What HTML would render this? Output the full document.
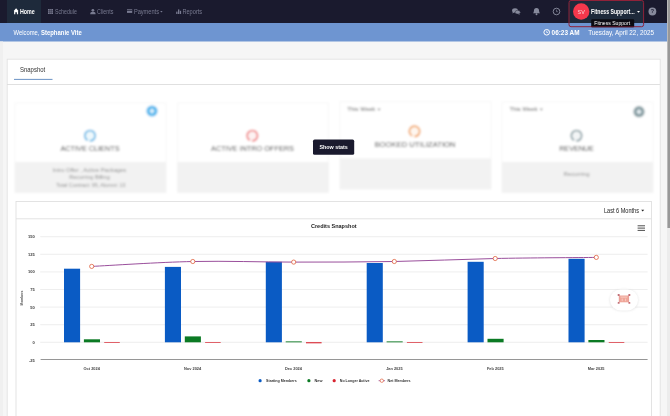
<!DOCTYPE html>
<html><head><meta charset="utf-8"><title>Home</title>
<style>
*{margin:0;padding:0}
html,body{width:670px;height:416px;overflow:hidden;background:#f6f6f6}
svg{display:block;font-family:"Liberation Sans",sans-serif;will-change:transform}
text{font-family:"Liberation Sans",sans-serif}
</style></head><body>
<svg width="670" height="416" viewBox="0 0 670 416">
<defs>
<filter id="b" x="-5%" y="-5%" width="110%" height="110%"><feGaussianBlur stdDeviation="1.05"/></filter>
<filter id="sh" x="-30%" y="-30%" width="160%" height="160%"><feGaussianBlur stdDeviation="1.2"/></filter>
</defs>
<rect width="670" height="416" fill="#f6f6f6"/>
<rect x="0" y="0" width="667" height="23" fill="#1a1a2e"/>
<rect x="0" y="23" width="667" height="18.5" fill="#6e95d1"/>
<rect x="7" y="0" width="34" height="23" fill="#1e2a3b"/>
<path d="M13.7 11.1 L16.1 8.2 L18.5 11.1 L18.1 11.1 L18.1 14.3 L16.9 14.3 L16.9 12.2 L15.3 12.2 L15.3 14.3 L14.1 14.3 L14.1 11.1 Z" fill="#fff"/>
<text x="20" y="14" font-size="6.7" fill="#fff" font-weight="bold" textLength="14.8" lengthAdjust="spacingAndGlyphs" >Home</text>
<rect x="48" y="9" width="5" height="5" fill="#797b91"/><path d="M48 10.7h5M48 12.3h5M49.7 9v5M51.3 9v5" stroke="#1a1a2e" stroke-width="0.4"/>
<text x="55" y="13.9" font-size="6.6" fill="#797b91" textLength="21.8" lengthAdjust="spacingAndGlyphs" >Schedule</text>
<circle cx="92.9" cy="10.3" r="1.4" fill="#797b91"/><path d="M90.2 14.2 q0 -2.4 2.7 -2.4 q2.7 0 2.7 2.4 z" fill="#797b91"/>
<text x="97.1" y="13.9" font-size="6.6" fill="#797b91" textLength="16.3" lengthAdjust="spacingAndGlyphs" >Clients</text>
<rect x="127" y="9.3" width="5.2" height="3.6" fill="#797b91"/><rect x="127" y="10.2" width="5.2" height="0.7" fill="#1a1a2e"/>
<text x="133.9" y="13.9" font-size="6.6" fill="#797b91" textLength="25.1" lengthAdjust="spacingAndGlyphs" >Payments</text>
<path d="M160.2 11 l2.4 0 l-1.2 1.4 z" fill="#797b91"/>
<rect x="176.2" y="11.6" width="1.3" height="2.4" fill="#797b91"/><rect x="178" y="9.4" width="1.3" height="4.6" fill="#797b91"/><rect x="179.8" y="10.8" width="1.3" height="3.2" fill="#797b91"/>
<text x="182.4" y="13.9" font-size="6.6" fill="#797b91" textLength="19.8" lengthAdjust="spacingAndGlyphs" >Reports</text>
<ellipse cx="515" cy="10.4" rx="2.9" ry="2.2" fill="#878a9c"/><path d="M513 11.6 l-0.7 1.9 l2.2 -1.2 z" fill="#878a9c"/><ellipse cx="517.7" cy="12.2" rx="2.6" ry="1.9" fill="#878a9c" stroke="#1a1a2e" stroke-width="0.4"/><path d="M519 13.4 l1 1.4 l-2.2 -0.8 z" fill="#878a9c"/>
<path d="M536.5 8 q2.6 0 2.6 3 q0 1.6 0.9 2.3 h-7 q0.9 -0.7 0.9 -2.3 q0 -3 2.6 -3 z" fill="#878a9c"/><circle cx="536.5" cy="14.2" r="0.95" fill="#878a9c"/>
<circle cx="556.5" cy="11.5" r="3.3" fill="none" stroke="#878a9c" stroke-width="0.95"/><path d="M556.5 9.7 v2 h1.4" stroke="#878a9c" stroke-width="0.65" fill="none"/>
<rect x="569" y="0.5" width="74.6" height="22.5" fill="#1e2a3b"/><rect x="569" y="0.5" width="74.6" height="26.2" rx="2" fill="none" stroke="#8f2239" stroke-width="1"/>
<circle cx="581.2" cy="11.5" r="8.2" fill="#f5384c"/>
<text x="581.2" y="13.6" font-size="5.8" fill="#fbd5d9" text-anchor="middle" textLength="7.2" lengthAdjust="spacingAndGlyphs" >SV</text>
<text x="591" y="13.9" font-size="6.5" fill="#fff" font-weight="bold" textLength="43.6" lengthAdjust="spacingAndGlyphs" >Fitness Support...</text>
<path d="M637 10.9 l3 0 l-1.5 1.8 z" fill="#fff"/>
<circle cx="652.4" cy="11.5" r="3.9" fill="#878a9c"/>
<text x="652.4" y="13.4" font-size="5.4" fill="#1a1a2e" font-weight="bold" text-anchor="middle" >?</text>
<text x="13.5" y="34.6" font-size="6.4" fill="#fff" textLength="25.9" lengthAdjust="spacingAndGlyphs" >Welcome,</text>
<text x="41" y="34.6" font-size="6.4" fill="#fff" font-weight="bold" textLength="40.8" lengthAdjust="spacingAndGlyphs" >Stephanie Vite</text>
<circle cx="546.7" cy="32.3" r="2.8" fill="none" stroke="#fff" stroke-width="1"/><path d="M546.7 30.7 v1.8 h1.3" stroke="#fff" stroke-width="0.7" fill="none"/>
<text x="551.6" y="34.6" font-size="6.4" fill="#fff" font-weight="bold" textLength="27.9" lengthAdjust="spacingAndGlyphs" >06:23 AM</text>
<text x="588.2" y="34.8" font-size="6.8" fill="#fff" textLength="65.8" lengthAdjust="spacingAndGlyphs" >Tuesday, April 22, 2025</text>
<rect x="591.2" y="19.2" width="43" height="8" rx="1" fill="#0b0b12"/>
<path d="M591.2 26.7 h43" stroke="#8a1d33" stroke-width="0.7" opacity="0.85"/>
<text x="612.2" y="25.1" font-size="5.7" fill="#fff" text-anchor="middle" textLength="35.8" lengthAdjust="spacingAndGlyphs" >Fitness Support</text>
<rect x="667" y="0" width="3" height="416" fill="#ececec"/>
<rect x="667.4" y="0" width="2.6" height="228" fill="#989898"/>
<rect x="0" y="41.5" width="3" height="375" fill="#f0f0f0"/>
<rect x="7.2" y="59.2" width="653" height="360" fill="#fff" stroke="#e2e2e2" stroke-width="0.9"/>
<path d="M7 84.5 H660" stroke="#dcdcdc" stroke-width="0.9"/>
<path d="M14 79.4 H52.5" stroke="#5a86bd" stroke-width="0.9"/>
<text x="20" y="72" font-size="6.9" fill="#333" textLength="25.2" lengthAdjust="spacingAndGlyphs" >Snapshot</text>
<g filter="url(#b)">
<rect x="15" y="103" width="151" height="89.5" fill="#fff" stroke="#f7f7f7" stroke-width="1"/>
<rect x="15" y="162" width="151" height="30.5" fill="#f2f2f2"/>
<rect x="177.5" y="103" width="151" height="89.5" fill="#fff" stroke="#f7f7f7" stroke-width="1"/>
<rect x="177.5" y="162" width="151" height="30.5" fill="#f2f2f2"/>
<rect x="340" y="101.5" width="151" height="87.5" fill="#fff" stroke="#f7f7f7" stroke-width="1"/>
<rect x="340" y="158.5" width="151" height="30.5" fill="#f2f2f2"/>
<rect x="502" y="102" width="151" height="90.5" fill="#fff" stroke="#f7f7f7" stroke-width="1"/>
<rect x="502" y="162" width="151" height="30.5" fill="#f2f2f2"/>
<circle cx="90" cy="135.7" r="5.2" fill="#5db6e6" fill-opacity="0.1" stroke="#5db6e6" stroke-width="1.7" stroke-dasharray="29.5 3.2" transform="rotate(118 90 135.7)"/>
<circle cx="252.3" cy="135.7" r="5.2" fill="#f07f80" fill-opacity="0.1" stroke="#f07f80" stroke-width="1.7" stroke-dasharray="29.5 3.2" transform="rotate(118 252.3 135.7)"/>
<circle cx="414.5" cy="131.3" r="5.2" fill="#f2a766" fill-opacity="0.1" stroke="#f2a766" stroke-width="1.7" stroke-dasharray="29.5 3.2" transform="rotate(118 414.5 131.3)"/>
<circle cx="576.5" cy="135.7" r="5.2" fill="#8ba0a6" fill-opacity="0.1" stroke="#8ba0a6" stroke-width="1.7" stroke-dasharray="29.5 3.2" transform="rotate(118 576.5 135.7)"/>
<circle cx="152" cy="111" r="5.6" fill="#5cbaee"/><path d="M149.6 111h4.8M152 108.6v4.8" stroke="#f2f9fd" stroke-width="1.6"/>
<circle cx="639" cy="111.7" r="5.6" fill="#8ba0a6"/><path d="M636.6 111.7h4.8M639 109.3v4.8" stroke="#f2f9fd" stroke-width="1.6"/>
<text x="90" y="151.4" font-size="7.6" fill="#4c4c4c" text-anchor="middle" textLength="59" lengthAdjust="spacingAndGlyphs" >ACTIVE CLIENTS</text>
<text x="252.5" y="151.4" font-size="7.6" fill="#4c4c4c" text-anchor="middle" textLength="83" lengthAdjust="spacingAndGlyphs" >ACTIVE INTRO OFFERS</text>
<text x="415" y="146.9" font-size="7.6" fill="#4c4c4c" text-anchor="middle" textLength="81" lengthAdjust="spacingAndGlyphs" >BOOKED UTILIZATION</text>
<text x="576.5" y="151.4" font-size="7.6" fill="#4c4c4c" text-anchor="middle" textLength="34.6" lengthAdjust="spacingAndGlyphs" >REVENUE</text>
<text x="89.5" y="171.6" font-size="5.6" fill="#929292" text-anchor="middle" textLength="73.5" lengthAdjust="spacingAndGlyphs" >Intro Offer , Active Packages</text>
<text x="89.5" y="179.4" font-size="5.6" fill="#929292" text-anchor="middle" textLength="40.5" lengthAdjust="spacingAndGlyphs" >Recurring Billing</text>
<text x="90.8" y="187.2" font-size="5.6" fill="#929292" text-anchor="middle" textLength="69.3" lengthAdjust="spacingAndGlyphs" >Total Contract: 95, Alumni: 13</text>
<text x="576.5" y="175.6" font-size="5.6" fill="#929292" text-anchor="middle" textLength="26" lengthAdjust="spacingAndGlyphs" >Recurring</text>
<text x="347.3" y="111.4" font-size="5.9" fill="#666" textLength="28" lengthAdjust="spacingAndGlyphs" >This Week</text>
<path d="M377.5 108.8 l3 0 l-1.5 1.7 z" fill="#666"/>
<text x="509.6" y="111.4" font-size="5.9" fill="#666" textLength="28" lengthAdjust="spacingAndGlyphs" >This Week</text>
<path d="M539.8 108.8 l3 0 l-1.5 1.7 z" fill="#666"/>
</g>
<rect x="313" y="139.6" width="41.2" height="15.2" rx="1.6" fill="#1a1a2e"/>
<text x="333.6" y="149.4" font-size="6" fill="#fff" font-weight="bold" text-anchor="middle" textLength="28.4" lengthAdjust="spacingAndGlyphs" >Show stats</text>
<rect x="16" y="201.5" width="635.5" height="220" fill="#fff" stroke="#e0e0e0" stroke-width="0.9"/>
<path d="M16 218.8 H651.5" stroke="#e0e0e0" stroke-width="0.9"/>
<text x="604" y="212.8" font-size="6.8" fill="#222" textLength="35" lengthAdjust="spacingAndGlyphs" >Last 6 Months</text>
<path d="M641.2 209.7 l3 0 l-1.5 1.8 z" fill="#222"/>
<text x="333.8" y="227.8" font-size="5.6" fill="#222" font-weight="bold" text-anchor="middle" textLength="45.7" lengthAdjust="spacingAndGlyphs" >Credits Snapshot</text>
<path d="M637.6 225.8 h7.4 M637.6 228.1 h7.4 M637.6 230.4 h7.4" stroke="#444" stroke-width="0.95"/>
<path d="M40.2 236.7 H647.6" stroke="#e7e7e7" stroke-width="0.7"/>
<text x="34.8" y="238.2" font-size="4" fill="#383838" font-weight="bold" text-anchor="end" >150</text>
<path d="M40.2 254.3 H647.6" stroke="#e7e7e7" stroke-width="0.7"/>
<text x="34.8" y="255.8" font-size="4" fill="#383838" font-weight="bold" text-anchor="end" >125</text>
<path d="M40.2 271.9 H647.6" stroke="#e7e7e7" stroke-width="0.7"/>
<text x="34.8" y="273.4" font-size="4" fill="#383838" font-weight="bold" text-anchor="end" >100</text>
<path d="M40.2 289.5 H647.6" stroke="#e7e7e7" stroke-width="0.7"/>
<text x="34.8" y="291.0" font-size="4" fill="#383838" font-weight="bold" text-anchor="end" >75</text>
<path d="M40.2 307.1 H647.6" stroke="#e7e7e7" stroke-width="0.7"/>
<text x="34.8" y="308.6" font-size="4" fill="#383838" font-weight="bold" text-anchor="end" >50</text>
<path d="M40.2 324.7 H647.6" stroke="#e7e7e7" stroke-width="0.7"/>
<text x="34.8" y="326.2" font-size="4" fill="#383838" font-weight="bold" text-anchor="end" >25</text>
<path d="M40.2 342.3 H647.6" stroke="#e7e7e7" stroke-width="0.7"/>
<text x="34.8" y="343.8" font-size="4" fill="#383838" font-weight="bold" text-anchor="end" >0</text>
<path d="M40.6 359.5 H647.6" stroke="#8a8a8a" stroke-width="0.9"/>
<text x="34.8" y="361.7" font-size="4" fill="#383838" font-weight="bold" text-anchor="end" >-25</text>
<text transform="translate(23.2 298) rotate(-90)" font-size="3.4" fill="#555" font-weight="bold" text-anchor="middle">Members</text>
<rect x="64.0" y="268.7" width="16.1" height="73.6" fill="#0a5bc4"/>
<rect x="83.9" y="339.3" width="16.1" height="3.0" fill="#0b7a24"/>
<rect x="104.2" y="342.2" width="15.6" height="0.7" fill="#d8232f"/>
<text x="91.7" y="369.8" font-size="3.9" fill="#444" font-weight="bold" text-anchor="middle" >Oct 2024</text>
<rect x="164.9" y="266.9" width="16.1" height="75.4" fill="#0a5bc4"/>
<rect x="184.8" y="336.4" width="16.1" height="5.9" fill="#0b7a24"/>
<rect x="205.1" y="342.2" width="15.6" height="0.7" fill="#d8232f"/>
<text x="192.6" y="369.8" font-size="3.9" fill="#444" font-weight="bold" text-anchor="middle" >Nov 2024</text>
<rect x="265.8" y="261.8" width="16.1" height="80.5" fill="#0a5bc4"/>
<rect x="285.7" y="341.4" width="16.1" height="0.9" fill="#0b7a24"/>
<rect x="306.0" y="342.2" width="15.6" height="1.1" fill="#d8232f"/>
<text x="293.5" y="369.8" font-size="3.9" fill="#444" font-weight="bold" text-anchor="middle" >Dec 2024</text>
<rect x="366.7" y="263" width="16.1" height="79.3" fill="#0a5bc4"/>
<rect x="386.6" y="341.4" width="16.1" height="0.9" fill="#0b7a24"/>
<rect x="406.9" y="342.2" width="15.6" height="0.7" fill="#d8232f"/>
<text x="394.4" y="369.8" font-size="3.9" fill="#444" font-weight="bold" text-anchor="middle" >Jan 2025</text>
<rect x="467.6" y="261.8" width="16.1" height="80.5" fill="#0a5bc4"/>
<rect x="487.5" y="338.8" width="16.1" height="3.5" fill="#0b7a24"/>
<text x="495.3" y="369.8" font-size="3.9" fill="#444" font-weight="bold" text-anchor="middle" >Feb 2025</text>
<rect x="568.5" y="258.8" width="16.1" height="83.5" fill="#0a5bc4"/>
<rect x="588.4" y="340" width="16.1" height="2.3" fill="#0b7a24"/>
<rect x="608.7" y="342.2" width="15.6" height="0.7" fill="#d8232f"/>
<text x="596.2" y="369.8" font-size="3.9" fill="#444" font-weight="bold" text-anchor="middle" >Mar 2025</text>
<path d="M91.7 266.4 C108.6 265.6 159.1 262.2 192.8 261.5 C226.5 260.8 260.1 262.1 293.7 262.1 C327.3 262.1 360.7 262.1 394.3 261.5 C427.9 260.9 461.5 259.2 495.2 258.5 C528.9 257.8 579.4 257.6 596.3 257.4" fill="none" stroke="#9a4f9c" stroke-width="1"/>
<circle cx="91.7" cy="266.4" r="2.1" fill="#fff" stroke="#e0603c" stroke-width="0.8"/>
<circle cx="192.8" cy="261.5" r="2.1" fill="#fff" stroke="#e0603c" stroke-width="0.8"/>
<circle cx="293.7" cy="262.1" r="2.1" fill="#fff" stroke="#e0603c" stroke-width="0.8"/>
<circle cx="394.3" cy="261.5" r="2.1" fill="#fff" stroke="#e0603c" stroke-width="0.8"/>
<circle cx="495.2" cy="258.5" r="2.1" fill="#fff" stroke="#e0603c" stroke-width="0.8"/>
<circle cx="596.3" cy="257.4" r="2.1" fill="#fff" stroke="#e0603c" stroke-width="0.8"/>
<circle cx="260.1" cy="380.7" r="1.6" fill="#0a5bc4"/>
<text x="266" y="382.09999999999997" font-size="3.9" fill="#333" font-weight="bold" textLength="30.7" lengthAdjust="spacingAndGlyphs" >Starting Members</text>
<circle cx="308.9" cy="380.7" r="1.6" fill="#0b7a24"/>
<text x="314.6" y="382.09999999999997" font-size="3.9" fill="#333" font-weight="bold" textLength="7.9" lengthAdjust="spacingAndGlyphs" >New</text>
<circle cx="334.2" cy="380.7" r="1.6" fill="#d8232f"/>
<text x="339.8" y="382.09999999999997" font-size="3.9" fill="#333" font-weight="bold" textLength="29.8" lengthAdjust="spacingAndGlyphs" >No Longer Active</text>
<path d="M378.6 380.7 h6.4" stroke="#9a4f9c" stroke-width="0.8"/><circle cx="381.8" cy="380.7" r="1.7" fill="#fff" stroke="#e0603c" stroke-width="0.7"/>
<text x="387.5" y="382.09999999999997" font-size="3.9" fill="#333" font-weight="bold" textLength="23" lengthAdjust="spacingAndGlyphs" >Net Members</text>
<rect x="609.6" y="289.6" width="28.8" height="21.4" rx="10.5" fill="#d8d8d8" filter="url(#sh)" opacity="0.55"/>
<rect x="610" y="289.4" width="28" height="21" rx="10.5" fill="#fff"/>
<rect x="619.3" y="295.5" width="9.3" height="6.8" fill="#f0a699"/>
<path d="M620.6 297.1 h6.7 M622.2 298.6 v2.6 M625.6 298.6 v2.6" stroke="#f8cfc6" stroke-width="0.9"/>
<path d="M619.3 295.5 v6.8 M628.6 295.5 v6.8" stroke="#e58f88" stroke-width="0.8"/>
<rect x="617.7" y="294" width="1.9" height="1.9" rx="0.5" fill="#c27078"/>
<rect x="628.4" y="294" width="1.9" height="1.9" rx="0.5" fill="#c27078"/>
<rect x="617.7" y="301.9" width="1.9" height="1.9" rx="0.5" fill="#c27078"/>
<rect x="628.4" y="301.9" width="1.9" height="1.9" rx="0.5" fill="#c27078"/>
</svg></body></html>
